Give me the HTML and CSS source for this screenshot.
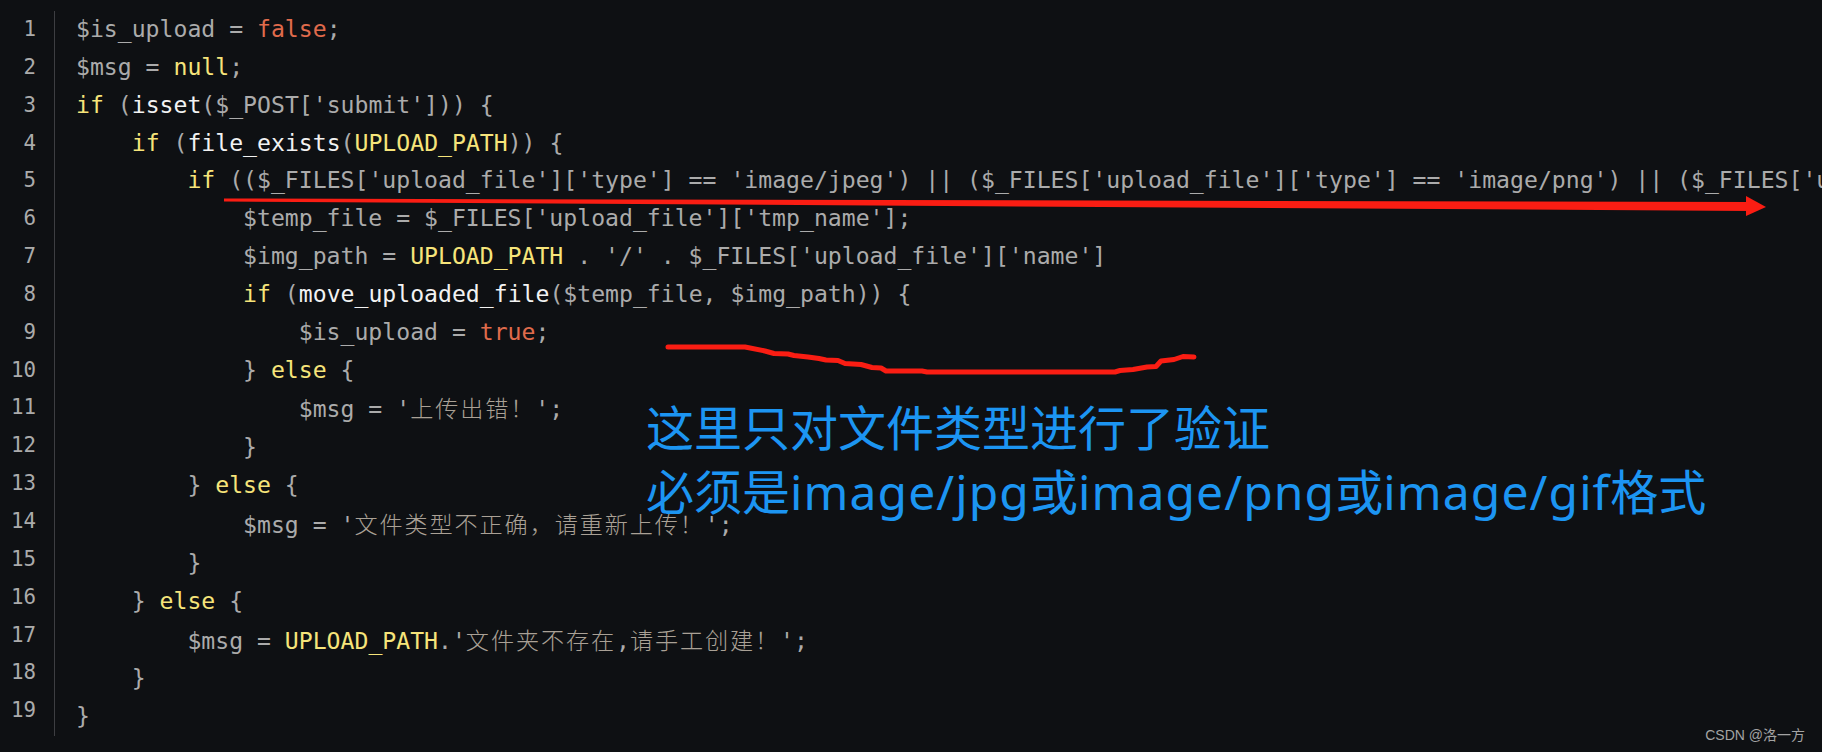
FILE: index.html
```html
<!DOCTYPE html>
<html>
<head>
    <meta charset="UTF-8">
    <title>upload check</title>
    <link rel="stylesheet" href="styles.css">
</head>
<body>
    <div class="editor">
        <div class="gutter">
            <div>1</div><div>2</div><div>3</div><div>4</div><div>5</div>
            <div>6</div><div>7</div><div>8</div><div>9</div><div>10</div>
            <div>11</div><div>12</div><div>13</div><div>14</div><div>15</div>
            <div>16</div><div>17</div><div>18</div><div>19</div>
        </div>
<pre class="code"><span class="var">$is_upload</span> = <span class="bool">false</span>;
$msg = <span class="kw">null</span>;
<span class="kw">if</span> (<span class="fn">isset</span>($_POST['submit'])) {
    <span class="kw">if</span> (<span class="fn">file_exists</span>(<span class="kw">UPLOAD_PATH</span>)) {
        <span class="kw">if</span> (($_FILES['upload_file']['type'] == 'image/jpeg') || ($_FILES['upload_file']['type'] == 'image/png') || ($_FILES['upload_file']['type'] == 'image/gif')) {
            $temp_file = $_FILES['upload_file']['tmp_name'];
            $img_path = <span class="kw">UPLOAD_PATH</span> . '/' . $_FILES['upload_file']['name']
            <span class="kw">if</span> (<span class="fn">move_uploaded_file</span>($temp_file, $img_path)) {
                $is_upload = <span class="bool">true</span>;
            } <span class="kw">else</span> {
                $msg = '<span class="zh">上传出错！</span>';
            }
        } <span class="kw">else</span> {
            $msg = '<span class="zh">文件类型不正确，请重新上传！</span>';
        }
    } <span class="kw">else</span> {
        $msg = <span class="kw">UPLOAD_PATH</span>.'<span class="zh">文件夹不存在</span>,<span class="zh">请手工创建！</span>';
    }
}</pre>
    </div>

    <svg class="marks" width="1822" height="752" viewBox="0 0 1822 752">
        <polygon class="ink" points="224,198.5 1750,202 1750,211 224,201.5"/>
        <polygon class="ink" points="1746,196 1766,207 1746,216"/>
        <polyline class="pen" points="668,347 745,347 765,351 774,353.5 788,354 794,355.5 808,357 819,358.5 826,360 838,360.5 845,363.5 861,364.5 872,367.5 881,368 886,371 922,371 927,372 1115,372 1120,370.5 1133,369.5 1147,367 1156,366.5 1161,361 1174,359.5 1183,356.5 1194,357"/>
    </svg>

    <div class="note">这里只对文件类型进行了验证<br>必须是<span class="latin">image/jpg</span>或<span class="latin">image/png</span>或<span class="latin">image/gif</span>格式</div>

    <div class="watermark">CSDN @洛一方</div>
</body>
</html>
```

FILE: styles.css
```css
html, body {
    margin: 0;
    padding: 0;
    width: 1822px;
    height: 752px;
    overflow: hidden;
    background-color: #0e1013;
}

.editor {
    display: flex;
    flex-direction: row;
    margin-top: 11px;
}

.gutter {
    flex-shrink: 0;
    width: 36px;
    padding-right: 18px;
    border-right: 1px solid #3d3e42;
    text-align: right;
    font-family: "DejaVu Sans Mono", "Liberation Mono", monospace;
    font-size: 20.8px;
    line-height: 37.85px;
    color: #ababab;
}

.code {
    flex-shrink: 0;
    margin: 0;
    padding-left: 21px;
    font-family: "DejaVu Sans Mono", "Liberation Mono", monospace;
    font-size: 23.14px;
    line-height: 37.85px;
    color: #ababab;
    white-space: pre;
}

.kw {
    color: #f6e47a;
}
.fn {
    color: #f2f2f2;
}
.bool {
    color: #e06b4c;
}
.zh {
    font-family: "Noto Sans CJK SC", sans-serif;
    font-weight: 300;
    letter-spacing: 1.9px;
    color: #aaa196;
}

.marks {
    position: absolute;
    top: 0;
    left: 0;
    pointer-events: none;
}
.ink {
    fill: #fa1d13;
}
.pen {
    fill: none;
    stroke: #fa1d13;
    stroke-width: 5;
    stroke-linecap: round;
    stroke-linejoin: round;
}

.note {
    position: absolute;
    left: 646px;
    top: 396px;
    font-family: "Noto Sans", "Noto Sans CJK SC", sans-serif;
    font-size: 48px;
    line-height: 64px;
    color: #1c95f2;
    white-space: nowrap;
}
.latin {
    letter-spacing: 1.1px;
}

.watermark {
    position: absolute;
    right: 17px;
    bottom: 8px;
    font-family: "Liberation Sans", "Noto Sans CJK SC", sans-serif;
    font-size: 14px;
    color: #a3a3a3;
}
```
